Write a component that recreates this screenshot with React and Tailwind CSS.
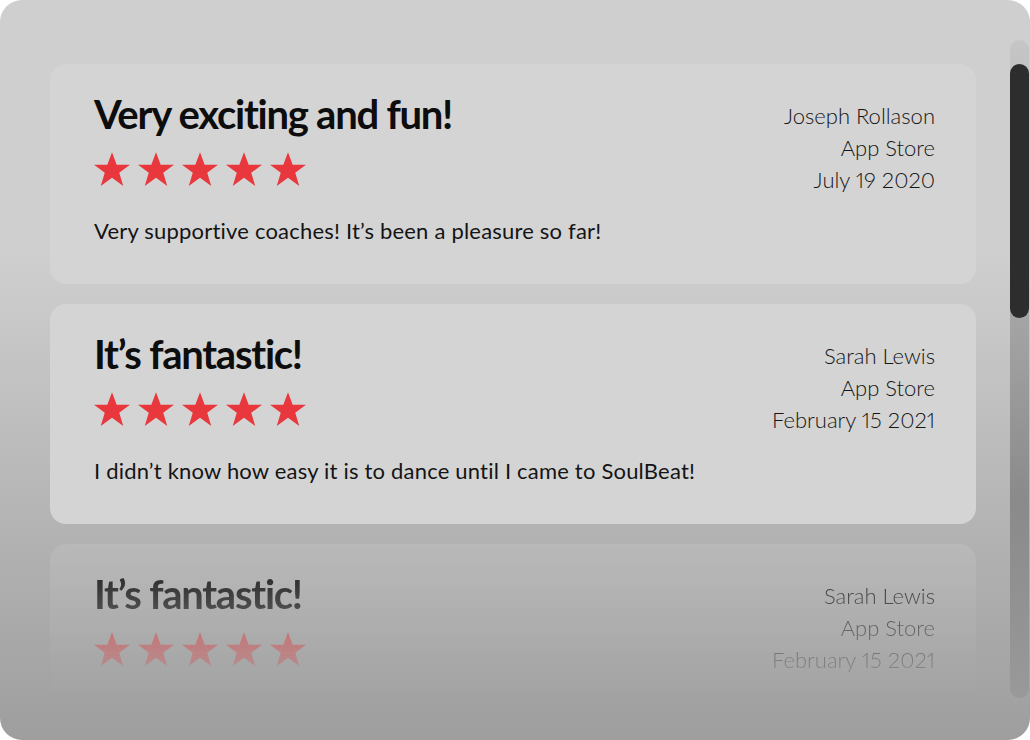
import React from "react";

const reviews = [
  {
    title: "Very exciting and fun!",
    body: "Very supportive coaches! It’s been a pleasure so far!",
    name: "Joseph Rollason",
    source: "App Store",
    date: "July 19 2020",
  },
  {
    title: "It’s fantastic!",
    body: "I didn’t know how easy it is to dance until I came to SoulBeat!",
    name: "Sarah Lewis",
    source: "App Store",
    date: "February 15 2021",
  },
  {
    title: "It’s fantastic!",
    body: "I didn’t know how easy it is to dance until I came to SoulBeat!",
    name: "Sarah Lewis",
    source: "App Store",
    date: "February 15 2021",
  },
];

function Star() {
  return (
    <svg width="36" height="34" viewBox="0.8 1.5 22.4 21" className="shrink-0">
      <polygon
        points="12,1.5 14.9,9.4 23.2,9.4 16.5,14.3 19,22.5 12,17.5 5,22.5 7.5,14.3 0.8,9.4 9.1,9.4"
        fill="#e8383d"
      />
    </svg>
  );
}

function Card({ r, faded }) {
  return (
    <div
      className={
        faded
          ? "w-[926px] h-[220px] shrink-0 rounded-[16px] bg-white/10 pt-[30px] pl-[44px] pr-[41px] flex justify-between [mask-image:linear-gradient(to_bottom,black_0%,transparent_73%)]"
          : "w-[926px] h-[220px] shrink-0 rounded-[16px] bg-[#d4d4d4] pt-[30px] pl-[44px] pr-[41px] flex justify-between"
      }
    >
      <div className="flex flex-col">
        <h2 className="text-[40px] leading-[40px] font-bold tracking-[-1.25px] text-[#0d0d0d]">
          {r.title}
        </h2>
        <div className="flex gap-[8px] mt-[18px]">
          <Star />
          <Star />
          <Star />
          <Star />
          <Star />
        </div>
        <p className="mt-[29px] text-[22px] leading-[32px] tracking-[0.2px] text-[#141414]">
          {r.body}
        </p>
      </div>
      <div className="mt-[6px] flex flex-col items-end text-[22px] leading-[32px] font-light text-[#161616] [font-variant-numeric:proportional-nums]">
        <span>{r.name}</span>
        <span>{r.source}</span>
        <span>{r.date}</span>
      </div>
    </div>
  );
}

export default function App() {
  return (
    <div
      className="w-[1030px] h-[740px] bg-white [font-variant-ligatures:none]"
      style={{ fontFamily: "Lato, 'Noto Sans', sans-serif" }}
    >
      <div className="h-full rounded-[22px] overflow-hidden flex bg-[linear-gradient(to_bottom,#cfcfcf_34%,#9e9e9e_100%)]">
        <div className="flex-1 h-full overflow-hidden pl-[50px] pt-[64px] flex flex-col gap-[20px]">
          {reviews.map((r, i) => (
            <Card key={i} r={r} faded={i === 2} />
          ))}
        </div>
        <div className="w-[19px] mr-[1px] mt-[40px] h-[658px] rounded-full bg-[linear-gradient(to_bottom,#c6c6c6_0%,#a2a2a2_45%,#8a8a8a_70%,#999999_100%)]">
          <div className="mt-[24px] h-[254px] rounded-full bg-[#2e2d2e]" />
        </div>
      </div>
    </div>
  );
}
